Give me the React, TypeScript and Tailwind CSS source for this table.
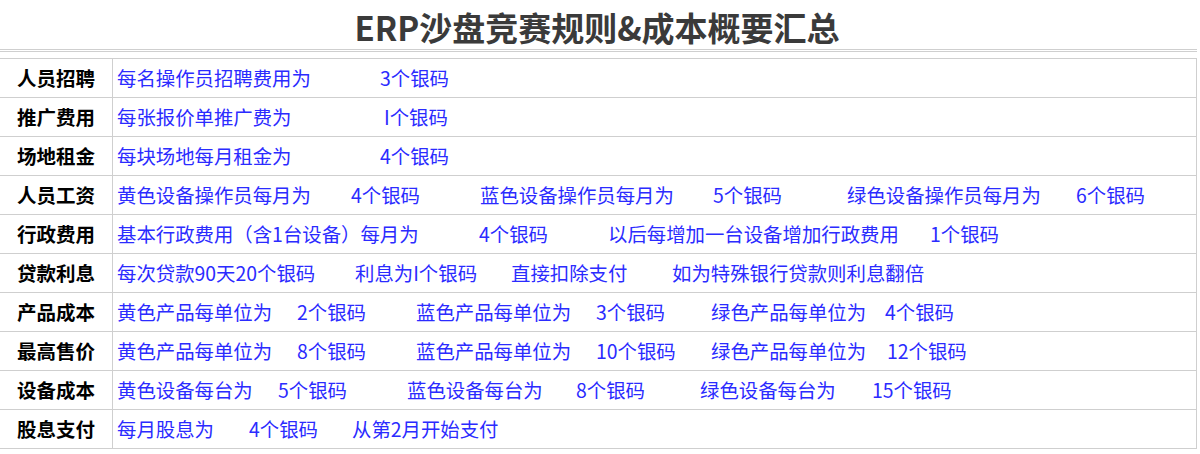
import React from "react";

type Seg = [string, number?];

const rows: { label: string; segs: Seg[] }[] = [
  { label: "人员招聘", segs: [["每名操作员招聘费用为", 263], ["3个银码"]] },
  { label: "推广费用", segs: [["每张报价单推广费为", 267], ["I个银码"]] },
  { label: "场地租金", segs: [["每块场地每月租金为", 263], ["4个银码"]] },
  {
    label: "人员工资",
    segs: [
      ["黄色设备操作员每月为", 234],
      ["4个银码", 129],
      ["蓝色设备操作员每月为", 233],
      ["5个银码", 134],
      ["绿色设备操作员每月为", 229],
      ["6个银码"],
    ],
  },
  {
    label: "行政费用",
    segs: [
      ["基本行政费用（含1台设备）每月为", 362],
      ["4个银码", 129],
      ["以后每增加一台设备增加行政费用", 322],
      ["1个银码"],
    ],
  },
  {
    label: "贷款利息",
    segs: [
      ["每次贷款90天20个银码", 238],
      ["利息为I个银码", 156],
      ["直接扣除支付", 161],
      ["如为特殊银行贷款则利息翻倍"],
    ],
  },
  {
    label: "产品成本",
    segs: [
      ["黄色产品每单位为", 180],
      ["2个银码", 119],
      ["蓝色产品每单位为", 180],
      ["3个银码", 115],
      ["绿色产品每单位为", 174],
      ["4个银码"],
    ],
  },
  {
    label: "最高售价",
    segs: [
      ["黄色产品每单位为", 180],
      ["8个银码", 119],
      ["蓝色产品每单位为", 180],
      ["10个银码", 115],
      ["绿色产品每单位为", 176],
      ["12个银码"],
    ],
  },
  {
    label: "设备成本",
    segs: [
      ["黄色设备每台为", 161],
      ["5个银码", 129],
      ["蓝色设备每台为", 169],
      ["8个银码", 124],
      ["绿色设备每台为", 172],
      ["15个银码"],
    ],
  },
  {
    label: "股息支付",
    segs: [
      ["每月股息为", 132],
      ["4个银码", 103],
      ["从第2月开始支付"],
    ],
  },
];

export default function App() {
  return (
    <div
      className="w-[1200px] h-[454px] bg-white overflow-hidden"
      style={{ fontFamily: '"Noto Sans CJK SC", "Noto Sans", sans-serif' }}
    >
      <div className="w-[1197px]">
        <div className="h-[49px] flex items-center justify-center pt-[6px]">
          <h1 className="text-[33px] font-bold leading-none text-[#3a3a3a] ml-[-3px]">
            ERP沙盘竞赛规则&amp;成本概要汇总
          </h1>
        </div>
        <div className="h-[3px] border-y border-[#cfcfcf]" />
        <div className="mt-[6px] border-t border-r border-[#cfcfcf]">
          {rows.map((r) => (
            <div
              key={r.label}
              className="grid grid-cols-[113px_1fr] h-[39px] border-b border-[#cfcfcf]"
            >
              <div className="flex items-center justify-center border-r border-[#cfcfcf] text-[19.5px] font-bold text-black leading-none">
                {r.label}
              </div>
              <div className="flex items-center pl-[4px] text-[19.4px] text-[#2b2bff] leading-none whitespace-nowrap">
                {r.segs.map(([t, w], i) => (
                  <span
                    key={i}
                    className="shrink-0"
                    style={w ? { width: w } : undefined}
                  >
                    {t}
                  </span>
                ))}
              </div>
            </div>
          ))}
        </div>
      </div>
    </div>
  );
}
